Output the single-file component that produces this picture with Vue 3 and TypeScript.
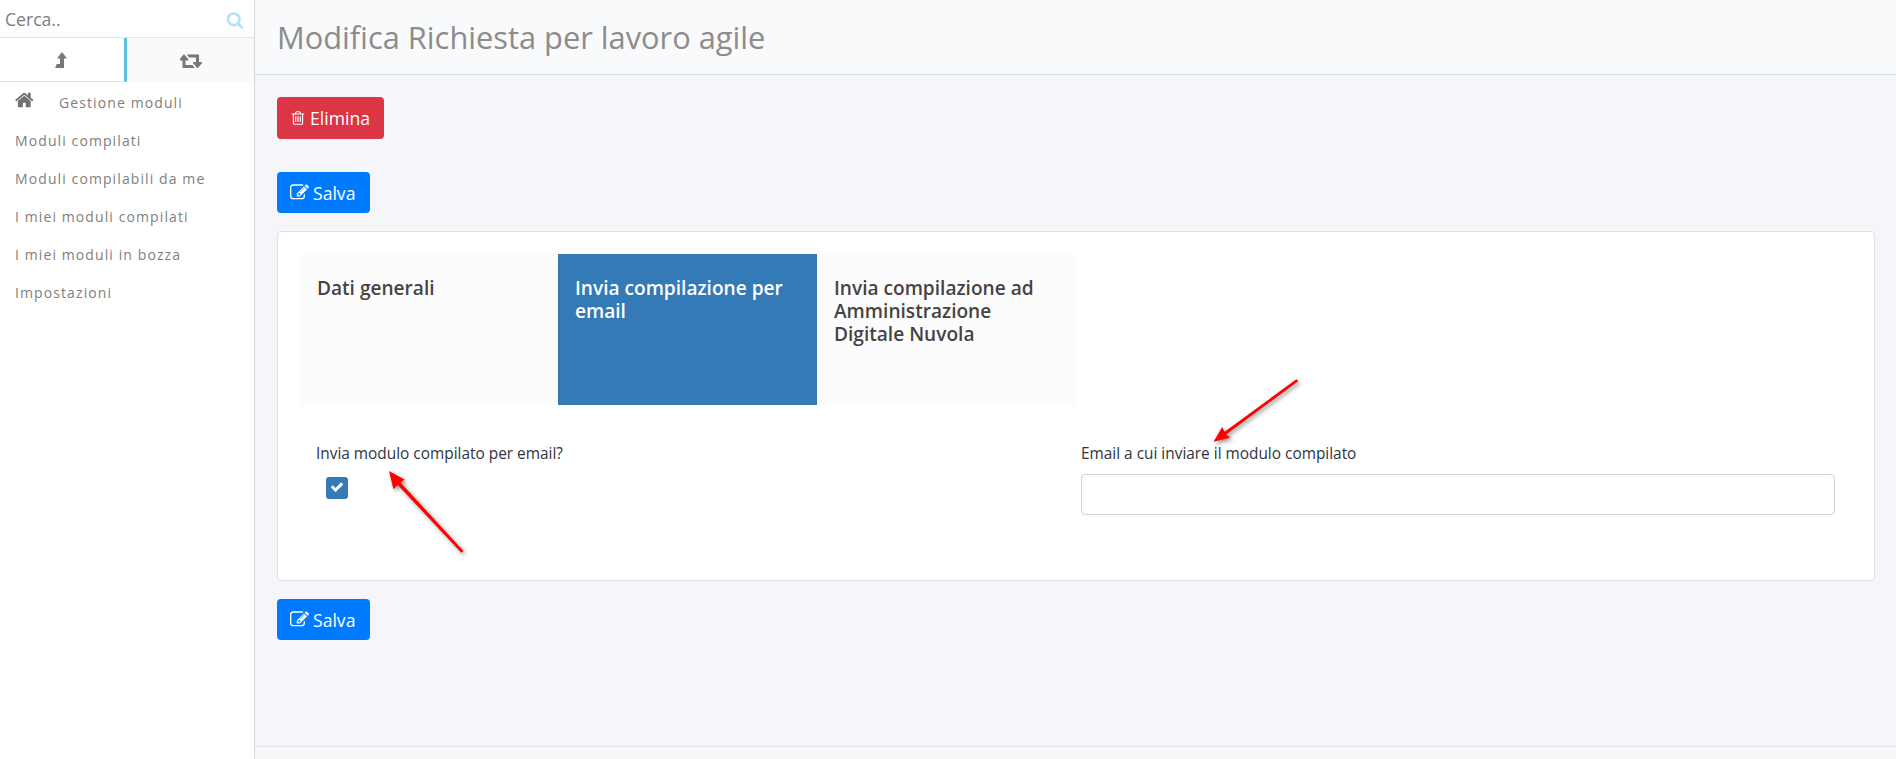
<script setup lang="ts">
const navItems: string[] = [
  'Moduli compilati',
  'Moduli compilabili da me',
  'I miei moduli compilati',
  'I miei moduli in bozza',
  'Impostazioni'
]
const tabs: { label: string; active: boolean }[] = [
  { label: 'Dati generali', active: false },
  { label: 'Invia compilazione per email', active: true },
  { label: 'Invia compilazione ad Amministrazione Digitale Nuvola', active: false }
]
const editPath =
  'M888 1184l116-116-152-152-116 116v56h96v96h56zm440-720q-16-16-33 1l-350 350q-17 17-1 33t33-1l350-350q17-17 1-33zm80 594v190q0 119-84.500 203.500t-203.500 84.500h-832q-119 0-203.500-84.500t-84.500-203.500v-832q0-119 84.500-203.500t203.500-84.500h832q63 0 117 25 15 7 18 23 3 17-9 29l-49 49q-14 14-32 8-23-6-45-6h-832q-66 0-113 47t-47 113v832q0 66 47 113t113 47h832q66 0 113-47t47-113v-126q0-13 9-22l64-64q15-15 35-7t20 29zm-96-738l288 288-672 672h-288v-288zm444 132l-92 92-288-288 92-92q28-28 68-28t68 28l152 152q28 28 28 68t-28 68z'
</script>

<template>
  <div class="page">
    <aside class="sidebar">
      <div class="search">
        <input class="search-input" type="text" placeholder="Cerca.." />
        <svg class="search-icon" viewBox="0 0 1792 1792"><path d="M1216 832q0-185-131.500-316.500t-316.500-131.500-316.500 131.500-131.500 316.500 131.500 316.500 316.500 131.500 316.500-131.500 131.500-316.500zm512 832q0 52-38 90t-90 38q-54 0-90-38l-343-342q-179 124-399 124-143 0-273.500-55.500t-225-150-150-225-55.500-273.500 55.500-273.500 150-225 225-150 273.500-55.500 273.500 55.500 225 150 150 225 55.500 273.500q0 220-124 399l343 343q37 37 37 90z" /></svg>
      </div>
      <div class="switch">
        <div class="switch-tab first">
          <svg class="lvl" viewBox="0 0 12 16"><path d="M7 0l5 6.500H9V16H0l1.800-4H5V6.500H2z" /></svg>
        </div>
        <div class="switch-tab second">
          <svg class="rt" viewBox="0 0 1920 1792"><path d="M1216 1504q0 13-9.500 22.500t-22.500 9.500h-960q-8 0-13.500-2t-9-7-5.500-8-3-11.500-1-11.500v-600h-192q-26 0-45-19t-19-45q0-24 15-41l320-384q19-22 49-22t49 22l320 384q15 17 15 41 0 26-19 45t-45 19h-192v384h576q16 0 25 11l160 192q7 10 7 21zm640-416q0 24-15 41l-320 384q-20 23-49 23t-49-23l-320-384q-15-17-15-41 0-26 19-45t45-19h192v-384h-576q-16 0-25-12l-160-192q-7-9-7-20 0-13 9.500-22.500t22.500-9.500h960q8 0 13.500 2t9 7 5.500 8 3 11.500 1 11.500v600h192q26 0 45 19t19 45z" /></svg>
        </div>
      </div>
      <nav class="nav">
        <div class="nav-head">
          <svg class="home" viewBox="0 0 1792 1792"><path d="M1408 992v480q0 26-19 45t-45 19h-384v-384h-256v384h-384q-26 0-45-19t-19-45v-480q0-1 .5-3t.5-3l575-474 575 474q1 2 1 6zm223-69l-62 74q-8 9-21 11h-3q-13 0-21-7l-692-577-692 577q-12 8-24 7-13-2-21-11l-62-74q-8-10-7-23.500t11-21.500l719-599q32-26 76-26t76 26l244 204v-195q0-14 9-23t23-9h192q14 0 23 9t9 23v408l219 182q10 8 11 21.500t-7 23.500z" /></svg>
          <span>Gestione moduli</span>
        </div>
        <a v-for="item in navItems" :key="item" class="nav-item">{{ item }}</a>
      </nav>
    </aside>

    <main class="main">
      <header class="top">
        <h1 class="title">Modifica Richiesta per lavoro agile</h1>
      </header>

      <section class="content">
        <button class="btn danger" type="button">
          <svg class="btn-icon" viewBox="0 0 1792 1792"><path d="M704 736v576q0 14-9 23t-23 9h-64q-14 0-23-9t-9-23v-576q0-14 9-23t23-9h64q14 0 23 9t9 23zm256 0v576q0 14-9 23t-23 9h-64q-14 0-23-9t-9-23v-576q0-14 9-23t23-9h64q14 0 23 9t9 23zm256 0v576q0 14-9 23t-23 9h-64q-14 0-23-9t-9-23v-576q0-14 9-23t23-9h64q14 0 23 9t9 23zm128 724v-948h-896v948q0 22 7 40.500t14.500 27 10.500 8.500h832q3 0 10.500-8.500t14.500-27 7-40.500zm-672-1076h448l-48-117q-7-9-17-11h-317q-10 2-17 11zm928 32v64q0 14-9 23t-23 9h-96v948q0 83-47 143.500t-113 60.500h-832q-66 0-113-58.500t-47-141.500v-952h-96q-14 0-23-9t-9-23v-64q0-14 9-23t23-9h309l70-167q15-37 54-63t79-26h320q40 0 79 26t54 63l70 167h309q14 0 23 9t9 23z" /></svg>
          Elimina
        </button>
        <button class="btn primary save-top" type="button">
          <svg class="btn-icon edit" viewBox="0 0 1792 1792"><path :d="editPath" /></svg>
          Salva
        </button>

        <div class="card">
          <div class="tabs">
            <div v-for="t in tabs" :key="t.label" class="tab" :class="{ active: t.active }">{{ t.label }}</div>
          </div>
          <div class="form">
            <div class="col left">
              <label class="lbl">Invia modulo compilato per email?</label>
              <span class="check">
                <svg viewBox="0 0 1792 1792"><path d="M1671 566q0 40-28 68l-724 724-136 136q-28 28-68 28t-68-28l-136-136-362-362q-28-28-28-68t28-68l136-136q28-28 68-28t68 28l294 295 656-657q28-28 68-28t68 28l136 136q28 28 28 68z" /></svg>
              </span>
            </div>
            <div class="col right">
              <label class="lbl">Email a cui inviare il modulo compilato</label>
              <input class="field" type="text" />
            </div>
          </div>
        </div>

        <button class="btn primary save-bottom" type="button">
          <svg class="btn-icon edit" viewBox="0 0 1792 1792"><path :d="editPath" /></svg>
          Salva
        </button>
      </section>

      <footer class="foot"></footer>
    </main>

    <svg class="arrows" width="1896" height="759" viewBox="0 0 1896 759">
      <defs>
        <filter id="arrowShadow" x="-30%" y="-30%" width="160%" height="160%">
          <feDropShadow dx="2" dy="2" stdDeviation="2" flood-color="#000" flood-opacity="0.45" />
        </filter>
      </defs>
      <g filter="url(#arrowShadow)" fill="#f00">
        <path d="M389 471l15.500 8.500-3.800 3.200 62.800 68.300-2.200 1.800-63.500-67.800-4.400 4.200z" />
        <path d="M1213.500 441.700l16.500-4-3.800-3.300 72-53.200-1.800-2-71.700 52.500-2.500-4.800z" />
      </g>
    </svg>
  </div>
</template>

<style>
html, body { margin: 0; overflow: hidden; }
</style>

<style scoped>
.page {
  position: relative;
  display: flex;
  width: 1896px;
  height: 759px;
  overflow: hidden;
  font-family: "Open Sans", "Noto Sans", sans-serif;
  background: #f5f6fa;
}
.sidebar {
  width: 255px;
  flex: none;
  box-sizing: border-box;
  background: #fff;
  border-right: 1px solid #d4d6da;
}
.search {
  height: 38px;
  box-sizing: border-box;
  display: flex;
  align-items: center;
  justify-content: space-between;
  padding: 0 10px 0 5px;
  border-bottom: 1px solid #e4e4e4;
}
.search-input {
  border: 0;
  outline: 0;
  padding: 0;
  width: 180px;
  font: 17.6px "Open Sans", sans-serif;
  background: transparent;
}
.search-input::placeholder { color: #7d7d7d; opacity: 1; }
.search-icon { width: 18px; height: 18px; fill: #b3e3f2; margin-top: 2px; }
.switch { display: flex; height: 44px; }
.switch-tab { display: flex; align-items: center; justify-content: center; box-sizing: border-box; }
.first { width: 127px; border-right: 3px solid #5bc0de; border-bottom: 1px solid #e2e2e2; padding-right: 2px; }
.second { flex: 1; background: #fafafa; padding-left: 2px; }
.lvl { width: 12px; height: 16px; fill: #777; }
.rt { width: 23px; height: 21px; fill: #777; }
.nav { display: flex; flex-direction: column; padding-top: 2px; }
.nav-head {
  display: flex;
  align-items: center;
  height: 38px;
  padding-left: 15px;
  font-size: 14px;
  letter-spacing: 1.1px;
  color: #808080;
}
.nav-head span { margin-left: 24px; margin-top: -1px; }
.home { width: 20px; height: 20px; fill: #707070; margin-top: -6px; }
.nav-item {
  height: 38px;
  line-height: 38px;
  padding-left: 15px;
  font-size: 14px;
  letter-spacing: 1.1px;
  color: #808080;
}
.main { flex: 1; min-width: 0; display: flex; flex-direction: column; }
.top {
  height: 75px;
  flex: none;
  box-sizing: border-box;
  background: #f9fafc;
  border-bottom: 1px solid #d2dde6;
  display: flex;
  align-items: center;
  padding-left: 22px;
}
.title {
  margin: 0 0 1px;
  font-size: 30.8px;
  font-weight: 400;
  color: #8c8c8c;
}
.content {
  flex: 1;
  display: flex;
  flex-direction: column;
  align-items: flex-start;
  padding: 22px 21px 0 22px;
}
.btn {
  display: inline-flex;
  align-items: center;
  justify-content: center;
  gap: 4px;
  height: 42px;
  padding: 0 15px 0 13px;
  border: 0;
  border-radius: 4px;
  color: #fff;
  font: 17.6px "Open Sans", sans-serif;
}
.danger { background: #dc3545; padding-right: 14px; }
.primary { background: #007bff; }
.save-top { margin-top: 33px; height: 41px; }
.save-bottom { margin-top: 18px; height: 41px; }
.btn-icon { width: 16px; height: 16px; fill: #fff; }
.edit { width: 19px; height: 19px; }
.card {
  margin-top: 18px;
  width: 100%;
  height: 350px;
  box-sizing: border-box;
  padding: 22px;
  background: #fff;
  border: 1px solid #e0e2e6;
  border-radius: 4px;
}
.tabs { display: grid; grid-template-columns: 258px 259px 259px; }
.tab {
  height: 151px;
  box-sizing: border-box;
  padding: 23px 17px 0;
  background: #fcfcfc;
  font-size: 19.1px;
  font-weight: 600;
  line-height: 23px;
  color: #444;
}
.tab.active { background: #337ab7; color: #fff; }
.form { display: flex; margin-top: 38px; }
.col { box-sizing: border-box; padding: 0 16px; display: flex; flex-direction: column; }
.left { width: 765px; }
.right { flex: 1; padding-right: 17px; }
.lbl { font-size: 15.4px; line-height: 20px; color: #2f3540; margin-top: 1px; }
.check {
  width: 22px;
  height: 22px;
  margin: 13px 0 0 10px;
  border-radius: 3px;
  background: #337ab7;
  display: flex;
  align-items: center;
  justify-content: center;
}
.check svg { width: 14px; height: 14px; fill: #fff; margin-top: -2px; }
.field {
  margin-top: 10px;
  height: 41px;
  box-sizing: border-box;
  width: 100%;
  border: 1px solid #ced4da;
  border-radius: 4px;
  background: #fff;
  outline: 0;
}
.foot {
  height: 12px;
  flex: none;
  background: #f8f8f8;
  border-top: 1px solid #e6e6e6;
}
.arrows { position: absolute; left: 0; top: 0; pointer-events: none; }
</style>
